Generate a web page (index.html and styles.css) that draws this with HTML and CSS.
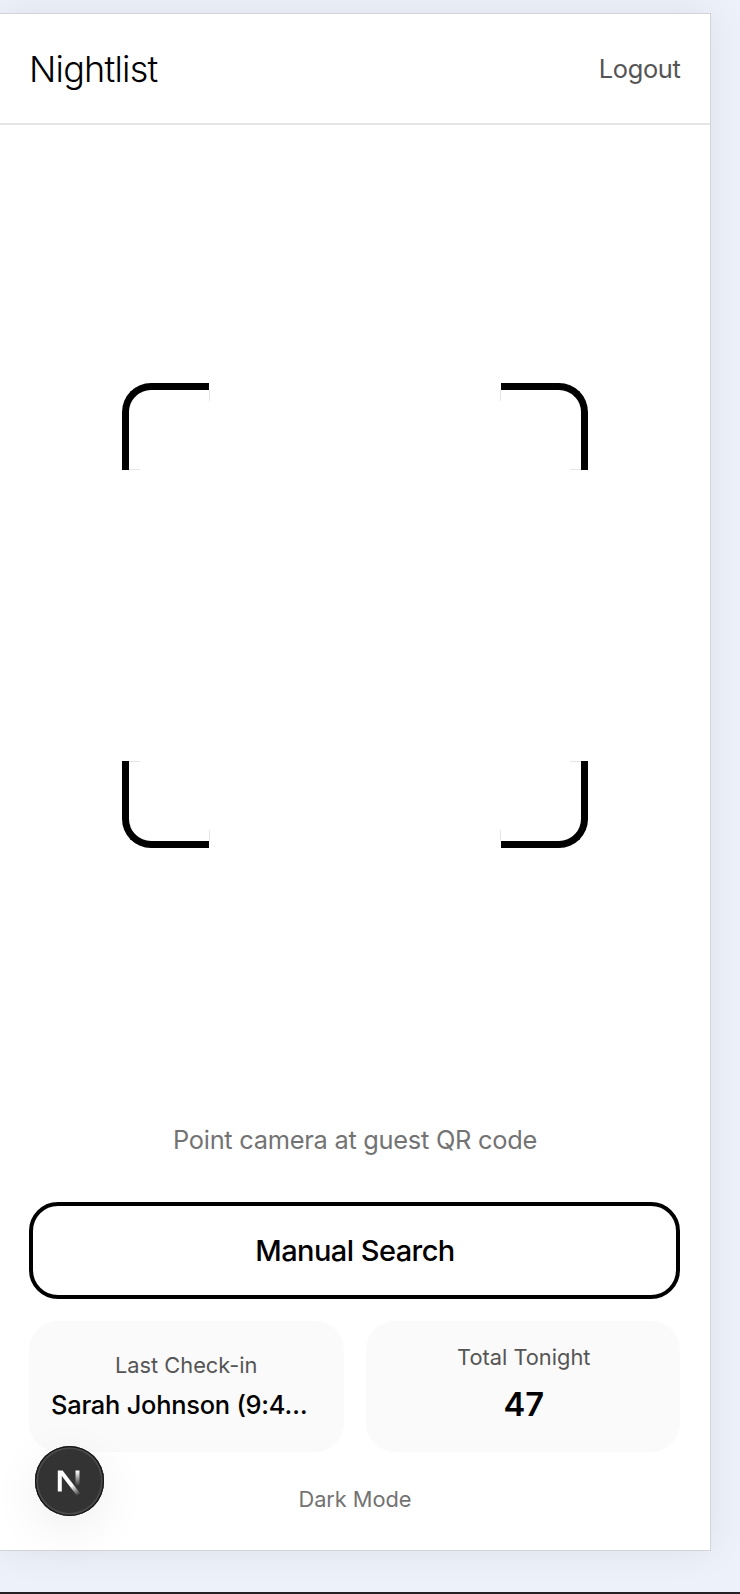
FILE: index.html
```html
<!DOCTYPE html>
<html lang="en">
<head>
<meta charset="utf-8">
<title>Nightlist</title>
<link rel="stylesheet" href="styles.css">
</head>
<body>
<main class="panel">
  <header class="header">
    <h1 class="brand">Nightlist</h1>
    <span class="logout">Logout</span>
  </header>
  <section class="scanner">
    <div class="frame">
      <i class="corner tl"></i><i class="corner tr"></i>
      <i class="corner bl"></i><i class="corner br"></i>
    </div>
  </section>
  <p class="hint"><span>Point camera at guest QR code</span></p>
  <button class="search">Manual Search</button>
  <section class="stats">
    <div class="card">
      <span class="label">Last Check-in</span>
      <span class="guest">Sarah Johnson (9:4…</span>
    </div>
    <div class="card total">
      <span class="label">Total Tonight</span>
      <span class="count">47</span>
    </div>
  </section>
  <div class="mode">Dark Mode</div>
  <div class="badge">
    <svg width="69" height="69" viewBox="0 0 69 69" fill="none">
      <defs>
        <linearGradient id="diag" gradientUnits="userSpaceOnUse" x1="37" y1="39" x2="44.5" y2="49"><stop stop-color="#fff"/><stop offset="1" stop-color="#fff" stop-opacity="0"/></linearGradient>
        <linearGradient id="stem" gradientUnits="userSpaceOnUse" x1="42" y1="25" x2="42" y2="40"><stop stop-color="#fff"/><stop offset="1" stop-color="#fff" stop-opacity="0"/></linearGradient>
      </defs>
      <path d="M22.8 24.5h4.8L45.3 47.4 42 49.7 26.8 30V45.4h-4Z" fill="url(#diag)"/>
      <path d="M40.5 24.5h4v16h-4z" fill="url(#stem)"/>
    </svg>
  </div>
</main>
<div class="edge"></div>
</body>
</html>
```
FILE: styles.css
```css
* { box-sizing: border-box; }
body {
  margin: 0;
  height: 1594px;
  padding-top: 13px;
  display: flex;
  flex-direction: column;
  justify-content: space-between;
  overflow: hidden;
  background: #edf1fa;
  font-family: Inter, sans-serif;
  color: #000;
}
.panel {
  position: relative;
  width: 711px;
  height: 1538px;
  display: flex;
  flex-direction: column;
  background: #fff;
  border: 1px solid #d2d3d6;
  border-left: 0;
  box-shadow: 0 0 36px rgba(0, 0, 0, .07);
}
.header {
  height: 111px;
  padding: 0 29px;
  display: flex;
  align-items: center;
  justify-content: space-between;
  border-bottom: 2px solid #e5e5e5;
}
.brand { margin: 0; font-size: 36px; font-weight: 300; letter-spacing: -.78px; }
.logout { font-size: 25.4px; color: #555; letter-spacing: -.35px; padding-right: .6px; }
.scanner {
  height: 980px;
  padding-top: 1px;
  display: flex;
  align-items: center;
  justify-content: center;
}
.frame {
  width: 466px;
  height: 465px;
  display: grid;
  grid-template-columns: 87px 87px;
  grid-template-rows: 87px 87px;
  place-content: space-between;
}
.corner { position: relative; border: 0 solid #000; }
.corner::before, .corner::after { content: ""; position: absolute; background: #e5e5e5; }
.corner::before { width: 1px; height: 11px; }
.corner::after { width: 11px; height: 1px; }
.tl { border-width: 7px 0 0 7px; border-top-left-radius: 29px; }
.tr { border-width: 7px 7px 0 0; border-top-right-radius: 29px; }
.bl { border-width: 0 0 7px 7px; border-bottom-left-radius: 29px; }
.br { border-width: 0 7px 7px 0; border-bottom-right-radius: 29px; }
.tl::before { top: 0; right: -1px; }
.tl::after { bottom: 0; left: 0; }
.tr::before { top: 0; left: -1px; }
.tr::after { bottom: 0; right: 0; }
.bl::before { bottom: 0; right: -1px; }
.bl::after { top: 0; left: 0; }
.br::before { bottom: 0; left: -1px; }
.br::after { top: 0; right: 0; }
.hint {
  margin: 17px 0 0;
  height: 36px;
  line-height: 36px;
  text-align: center;
  font-size: 25.4px;
  letter-spacing: -.27px;
  color: #737373;
}
.search {
  margin: 44px 30px 0 29px;
  height: 97px;
  padding: 0 0 0 1px;
  background: #fff;
  border: 4px solid #000;
  border-radius: 29px;
  font: 500 29px Inter, sans-serif;
  letter-spacing: -.55px;
  color: #000;
}
.stats {
  margin: 22px 30px 0 29px;
  height: 131px;
  display: grid;
  grid-template-columns: 1fr 1fr;
  gap: 22px;
}
.card {
  padding: 26px 22px 0;
  display: flex;
  flex-direction: column;
  align-items: center;
  border-radius: 29px;
  background: #fafafa;
}
.label { height: 36px; line-height: 36px; font-size: 21.8px; letter-spacing: 0; color: #555; }
.guest { align-self: flex-start; height: 44px; line-height: 44px; font-size: 25.4px; font-weight: 500; letter-spacing: -.22px; white-space: nowrap; }
.total { padding: 18px 21px 0 23px; }
.count { height: 58px; line-height: 58px; font-size: 32.7px; font-weight: 600; }
.mode { margin-top: 29px; line-height: 36px; text-align: center; font-size: 21.8px; letter-spacing: -.05px; color: #737373; }
.badge {
  position: absolute;
  left: 34.5px;
  top: 1432px;
  width: 69.5px;
  height: 69.5px;
  border-radius: 50%;
  background: #333;
  box-shadow: inset 0 0 0 1.3px #171717, inset 0 0 0 3px #4b4b4b, 0 14px 50px rgba(0, 0, 0, .07);
}
.badge svg { display: block; }
.edge { flex: none; height: 2px; background: #232126; }
```
